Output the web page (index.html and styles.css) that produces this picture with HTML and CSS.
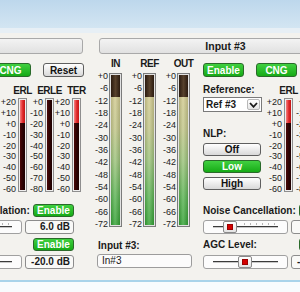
FILE: index.html
```html
<!DOCTYPE html>
<html>
<head>
<meta charset="utf-8">
<link rel="stylesheet" href="styles.css">
</head>
<body>
<div class="top"></div>
<div class="strip"></div>
<div class="stage">
  <div class="panels">
    <section class="panel">
      <div class="title">Input #2</div>
      <div class="body">
        <div class="left">
          <div class="meters">
            <div class="meter"><div class="hdr">IN</div><div class="scale"><span>+0</span><span>-6</span><span>-12</span><span>-18</span><span>-24</span><span>-30</span><span>-36</span><span>-42</span><span>-48</span><span>-54</span><span>-60</span><span>-66</span><span>-72</span></div><div class="bar"><div class="off"></div><div class="on"></div></div></div>
            <div class="meter"><div class="hdr">REF</div><div class="scale"><span>+0</span><span>-6</span><span>-12</span><span>-18</span><span>-24</span><span>-30</span><span>-36</span><span>-42</span><span>-48</span><span>-54</span><span>-60</span><span>-66</span><span>-72</span></div><div class="bar"><div class="off"></div><div class="on"></div></div></div>
            <div class="meter"><div class="hdr">OUT</div><div class="scale"><span>+0</span><span>-6</span><span>-12</span><span>-18</span><span>-24</span><span>-30</span><span>-36</span><span>-42</span><span>-48</span><span>-54</span><span>-60</span><span>-66</span><span>-72</span></div><div class="bar"><div class="off"></div><div class="on"></div></div></div>
          </div>
          <div class="inlabel">Input #2:</div>
          <div class="field">In#2</div>
        </div>
        <div class="right">
          <div class="btnrow">
            <div class="btn green">Enable</div>
            <div class="btn green">CNG</div>
            <div class="btn grey">Reset</div>
          </div>
          <div class="mid">
            <div class="col">
              <div class="lbl">Reference:</div>
              <div class="select"><span>Ref #2</span><div class="arrow"><svg width="9" height="6" viewBox="0 0 9 6"><polyline points="1,1 4.5,4.8 8,1" fill="none" stroke="#1a1a1a" stroke-width="1.8"/></svg></div></div>
              <div class="lbl nlp">NLP:</div>
              <div class="nlpbtns">
                <div class="btn grey wide">Off</div>
                <div class="btn green wide">Low</div>
                <div class="btn grey wide">High</div>
              </div>
            </div>
            <div class="smeters">
              <div class="smeter"><div class="hdr">ERL</div><div class="scale sm"><span>+20</span><span>+10</span><span>+0</span><span>-10</span><span>-20</span><span>-30</span><span>-40</span><span>-50</span><span>-60</span></div><div class="sbar"><div class="red"></div><div class="dark"></div></div></div>
              <div class="smeter"><div class="hdr">ERLE</div><div class="scale sm"><span>+0</span><span>-10</span><span>-20</span><span>-30</span><span>-40</span><span>-50</span><span>-60</span><span>-70</span><span>-80</span></div><div class="sbar"><div class="dark"></div></div></div>
              <div class="smeter"><div class="hdr">TER</div><div class="scale sm"><span>+20</span><span>+10</span><span>+0</span><span>-10</span><span>-20</span><span>-30</span><span>-40</span><span>-50</span><span>-60</span></div><div class="sbar"><div class="red"></div><div class="dark"></div></div></div>
            </div>
          </div>
          <div class="ctl">
            <div class="ctlrow"><span class="lbl">Noise Cancellation:</span><div class="btn green">Enable</div></div>
            <div class="slrow"><div class="slider ticks"><div class="thumb t1"><i></i></div></div><div class="value">6.0 dB</div></div>
            <div class="ctlrow gap"><span class="lbl">AGC Level:</span><div class="btn green">Enable</div></div>
            <div class="slrow"><div class="slider"><div class="thumb t2"><i></i></div></div><div class="value">-20.0 dB</div></div>
          </div>
        </div>
      </div>
    </section>
    <section class="panel">
      <div class="title">Input #3</div>
      <div class="body">
        <div class="left">
          <div class="meters">
            <div class="meter"><div class="hdr">IN</div><div class="scale"><span>+0</span><span>-6</span><span>-12</span><span>-18</span><span>-24</span><span>-30</span><span>-36</span><span>-42</span><span>-48</span><span>-54</span><span>-60</span><span>-66</span><span>-72</span></div><div class="bar"><div class="off"></div><div class="on"></div></div></div>
            <div class="meter"><div class="hdr">REF</div><div class="scale"><span>+0</span><span>-6</span><span>-12</span><span>-18</span><span>-24</span><span>-30</span><span>-36</span><span>-42</span><span>-48</span><span>-54</span><span>-60</span><span>-66</span><span>-72</span></div><div class="bar"><div class="off"></div><div class="on"></div></div></div>
            <div class="meter"><div class="hdr">OUT</div><div class="scale"><span>+0</span><span>-6</span><span>-12</span><span>-18</span><span>-24</span><span>-30</span><span>-36</span><span>-42</span><span>-48</span><span>-54</span><span>-60</span><span>-66</span><span>-72</span></div><div class="bar"><div class="off"></div><div class="on"></div></div></div>
          </div>
          <div class="inlabel">Input #3:</div>
          <div class="field">In#3</div>
        </div>
        <div class="right">
          <div class="btnrow">
            <div class="btn green">Enable</div>
            <div class="btn green">CNG</div>
            <div class="btn grey">Reset</div>
          </div>
          <div class="mid">
            <div class="col">
              <div class="lbl">Reference:</div>
              <div class="select"><span>Ref #3</span><div class="arrow"><svg width="9" height="6" viewBox="0 0 9 6"><polyline points="1,1 4.5,4.8 8,1" fill="none" stroke="#1a1a1a" stroke-width="1.8"/></svg></div></div>
              <div class="lbl nlp">NLP:</div>
              <div class="nlpbtns">
                <div class="btn grey wide">Off</div>
                <div class="btn green wide">Low</div>
                <div class="btn grey wide">High</div>
              </div>
            </div>
            <div class="smeters">
              <div class="smeter"><div class="hdr">ERL</div><div class="scale sm"><span>+20</span><span>+10</span><span>+0</span><span>-10</span><span>-20</span><span>-30</span><span>-40</span><span>-50</span><span>-60</span></div><div class="sbar"><div class="red"></div><div class="dark"></div></div></div>
              <div class="smeter"><div class="hdr">ERLE</div><div class="scale sm"><span>+0</span><span>-10</span><span>-20</span><span>-30</span><span>-40</span><span>-50</span><span>-60</span><span>-70</span><span>-80</span></div><div class="sbar"><div class="dark"></div></div></div>
              <div class="smeter"><div class="hdr">TER</div><div class="scale sm"><span>+20</span><span>+10</span><span>+0</span><span>-10</span><span>-20</span><span>-30</span><span>-40</span><span>-50</span><span>-60</span></div><div class="sbar"><div class="red"></div><div class="dark"></div></div></div>
            </div>
          </div>
          <div class="ctl">
            <div class="ctlrow"><span class="lbl">Noise Cancellation:</span><div class="btn green">Enable</div></div>
            <div class="slrow"><div class="slider ticks"><div class="thumb t1"><i></i></div></div><div class="value">6.0 dB</div></div>
            <div class="ctlrow gap"><span class="lbl">AGC Level:</span><div class="btn green">Enable</div></div>
            <div class="slrow"><div class="slider"><div class="thumb t2"><i></i></div></div><div class="value">-20.0 dB</div></div>
          </div>
        </div>
      </div>
    </section>
  </div>
</div>
<div class="bline"></div>
<div class="bottom"></div>
</body>
</html>
```
FILE: styles.css
```css
* { box-sizing: border-box; }
body {
  margin: 0;
  width: 300px;
  height: 292px;
  overflow: hidden;
  font-family: "Liberation Sans", Arial, sans-serif;
  color: #1a1a1a;
  background: #f3f2ee;
}
.top { height: 28px; background: linear-gradient(#bdd7ec, #d3e5f2); }
.strip { height: 5px; background: #e7eff5; }
.stage { height: 247px; overflow: hidden; }
.bline { height: 2px; background: #a9d3ea; }
.bottom { height: 10px; background: #f8fbfd; }

.panels { display: flex; gap: 10px; margin-left: -172px; }
.panel { flex: 0 0 254px; }
.title {
  margin: 5px 0 0 5px;
  width: 250px;
  height: 16px;
  border: 1px solid #a9a9a9;
  border-radius: 3px;
  background: linear-gradient(#f3f3f3, #e1e1e1);
  font-size: 10.5px;
  font-weight: bold;
  display: flex;
  align-items: center;
  justify-content: center;
  padding-left: 3px;
}
.body { display: flex; margin-top: 4px; }
.left { flex: 0 0 100px; }
.meters { display: flex; gap: 6px; }
.meter { display: grid; grid-template-columns: 14px 13px; column-gap: 1px; }
.hdr {
  grid-column: 2;
  grid-row: 1;
  height: 12px;
  line-height: 12px;
  display: flex;
  justify-content: center;
  font-size: 10px;
  font-weight: bold;
  letter-spacing: -0.5px;
  white-space: nowrap;
  margin-bottom: 3px;
}
.scale {
  grid-column: 1;
  grid-row: 2;
  height: 154px;
  display: flex;
  flex-direction: column;
  justify-content: space-between;
  align-items: flex-end;
  font-size: 9px;
  line-height: 6px;
  white-space: nowrap;
  color: #222;
}
.bar {
  grid-column: 2;
  grid-row: 2;
  height: 154px;
  border: 1px solid #7b7b7b;
  padding: 1px;
  background: #e2e2e2;
  display: flex;
  flex-direction: column;
}
.bar .off {
  height: 22px;
  background: linear-gradient(90deg, #2b1b10, #57412c 50%, #2b1b10);
}
.bar .on {
  flex: 1;
  background:
    linear-gradient(90deg, rgba(0,0,0,0.12), rgba(255,255,255,0.18) 45%, rgba(0,0,0,0.14)),
    linear-gradient(#d2cb90, #c3c78a 25%, #9dc47c 50%, #5db555 78%, #34a335);
}
.inlabel { margin: 13px 0 0 4px; font-size: 10px; font-weight: bold; line-height: 12px; }
.field {
  margin: 2px 0 0 3px;
  width: 95px;
  height: 14px;
  border: 1px solid #9c9c9c;
  border-radius: 3px;
  background: #fbfbfb;
  font-size: 10px;
  line-height: 12px;
  padding-left: 4px;
}

.right { margin-left: 9px; margin-top: 5px; }
.btnrow { display: flex; gap: 12px; }
.btn {
  width: 41px;
  height: 14px;
  border-radius: 3px;
  font-size: 10px;
  font-weight: bold;
  display: flex;
  align-items: center;
  justify-content: center;
  white-space: nowrap;
}
.btn.green { background: linear-gradient(#40d040, #16aa16); border: 1px solid #2a6a2a; color: #fff; }
.btn.grey { background: linear-gradient(#ffffff, #d9d9d9); border: 1px solid #5f5f5f; color: #111; }
.btn.wide { width: 58px; height: 13px; }

.mid { display: flex; margin-top: 7px; }
.col { flex: 0 0 60px; }
.lbl { font-size: 10px; font-weight: bold; line-height: 12px; height: 12px; white-space: nowrap; }
.select {
  margin-top: 1px;
  width: 59px;
  height: 15px;
  border: 1px solid #7a7a7a;
  background: #fff;
  display: flex;
}
.select span { flex: 1; padding-left: 2px; font-size: 10px; font-weight: bold; line-height: 13px; }
.arrow {
  width: 13px;
  margin: 1px;
  border: 1px solid #b8b8b8;
  border-radius: 2px;
  background: linear-gradient(#ffffff, #e6e6e6);
  display: flex;
  align-items: center;
  justify-content: center;
}
.nlp { margin-top: 16px; }
.nlpbtns { margin-top: 3px; display: flex; flex-direction: column; gap: 4px; }

.smeters { display: flex; gap: 2px; margin-left: 5px; }
.smeter { display: grid; grid-template-columns: 15px 9px; column-gap: 1px; }
.smeter .hdr { margin-top: 1px; margin-bottom: 1px; }
.scale.sm { height: 94px; padding-top: 1px; padding-right: 1px; }
.sbar {
  grid-column: 2;
  grid-row: 2;
  height: 94px;
  border: 1px solid #8e8e8e;
  padding: 1px;
  background: #eeeeee;
  display: flex;
  flex-direction: column;
}
.sbar .red { height: 23px; background: linear-gradient(90deg, #f58080, #e02a2a 55%, #c21414); }
.sbar .dark { flex: 1; background: linear-gradient(90deg, #4a0808, #2a0202 60%, #1e0101); }

.ctl { width: 137px; margin-top: 12px; }
.ctlrow { display: flex; justify-content: space-between; align-items: center; height: 13px; }
.ctlrow .btn { height: 13px; }
.ctlrow.gap { margin-top: 4px; }
.slrow { display: flex; gap: 3px; margin-top: 3px; height: 14px; }
.ctlrow.gap + .slrow { margin-top: 4px; }
.slider {
  position: relative;
  width: 85px;
  height: 14px;
  border: 1px solid #a0a0a0;
  border-radius: 3px;
  background:
    linear-gradient(#3a3a3a, #3a3a3a) no-repeat 9px 5px / 65px 1px,
    linear-gradient(#c8c8c8, #c8c8c8) no-repeat 9px 6px / 65px 1px,
    #fcfcfc;
}
.slider.ticks {
  background:
    linear-gradient(#3a3a3a, #3a3a3a) no-repeat 9px 5px / 65px 1px,
    linear-gradient(#c8c8c8, #c8c8c8) no-repeat 9px 6px / 65px 1px,
    repeating-linear-gradient(90deg, #b5b5b5 0 1px, transparent 1px 6px) no-repeat 40px 2px / 34px 2px,
    #fcfcfc;
}
.thumb {
  position: absolute;
  top: 0;
  width: 14px;
  height: 12px;
  border: 1px solid #8a8a8a;
  border-radius: 2px;
  background: linear-gradient(#ffffff, #e4e4e4);
  display: flex;
  align-items: center;
  justify-content: center;
}
.thumb i { display: block; width: 6px; height: 6px; background: #d40000; border: 1px solid #9a0000; }
.t1 { left: 19px; }
.t2 { left: 34px; }
.value {
  width: 49px;
  height: 14px;
  border: 1px solid #8c8c8c;
  border-radius: 3px;
  background: #f9f9f7;
  font-size: 10px;
  font-weight: bold;
  text-align: right;
  padding-right: 3px;
  line-height: 12px;
  white-space: nowrap;
}
```
